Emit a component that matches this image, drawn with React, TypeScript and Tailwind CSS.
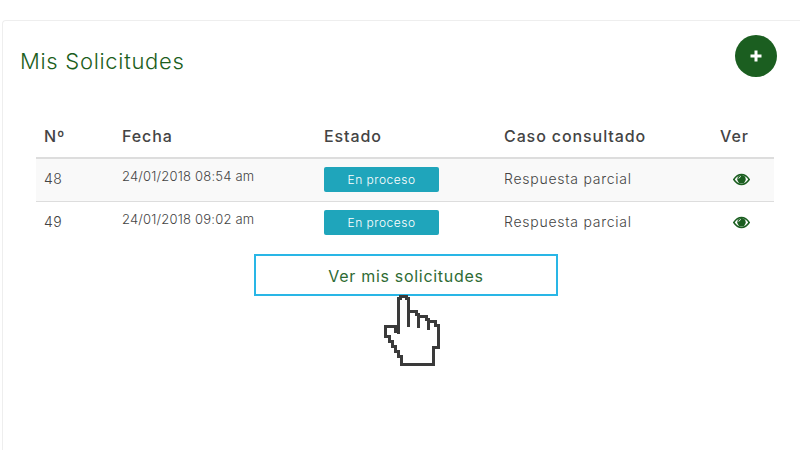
function Eye() {
  return (
    <svg width="17" height="13" viewBox="0 0 17 13" className="block">
      <path d="M0.8 6.5C3 3.2 5.6 1.6 8.5 1.6s5.5 1.6 7.7 4.9c-2.2 3.3-4.8 4.9-7.7 4.9S3 9.800 0.8 6.500z" fill="none" stroke="#1b5e20" strokeWidth="1.500" />
      <circle cx="8.500" cy="6.200" r="4.200" fill="#1b5e20" />
      <path d="M5.800 5.500c.3-1 1-1.700 2-2" fill="none" stroke="#fff" strokeWidth="1" />
    </svg>
  );
}
function Plus() {
  return (
    <svg width="12" height="12" viewBox="0 0 12 12">
      <path d="M4.500 0.500h3v4h4v3h-4v4h-3v-4h-4v-3h4z" fill="#fff" />
    </svg>
  );
}
function Hand() {
  return (
    <svg width="60" height="76" viewBox="0 0 60 76" shapeRendering="crispEdges" className="absolute left-[382px] top-[293px]">
      <path
        d="M16.500 41V5H18.500V3.500H24.500V5H26.500V18.500H34.500V21H36.500V23.500H44V26H46.500V28.500H53V32H56.500V54H51.500V71.500H19.500V63H16V58H13V53H10V48H7V43H3.500V33.500H13V38H16.500V41z"
        fill="#fff"
        stroke="#3a3a3a"
        strokeWidth="3"
      />
      <path d="M26.500 18.500V34M36.500 21V35M46.500 26V37" fill="none" stroke="#3a3a3a" strokeWidth="3" />
    </svg>
  );
}
const rows = [
  { n: "48", f: "24/01/2018 08:54 am" },
  { n: "49", f: "24/01/2018 09:02 am" },
];
export default function App() {
  return (
    <div className="relative w-[800px] h-[450px] overflow-hidden bg-white pt-5 pl-0.5 font-['Inter','Liberation_Sans',sans-serif]">
      <div className="h-[440px] w-[810px] rounded-tl border-l border-t border-[#eeeeee] bg-white">
        <div className="flex h-[93px] w-[774px] items-start justify-between pl-[17px] pt-[14px]">
          <h1 className="mt-[10px] text-[22px] leading-[32px] font-light tracking-[0.7px] text-[#1b5e20]">Mis Solicitudes</h1>
          <button className="flex h-[42px] w-[42px] items-center justify-center rounded-full bg-[#1b5e20]"><Plus /></button>
        </div>
        <table className="ml-[33px] w-[738px] table-fixed border-collapse text-[#444444]">
          <colgroup>
            <col className="w-[78px]" />
            <col className="w-[202px]" />
            <col className="w-[180px]" />
            <col className="w-[216px]" />
            <col className="w-[62px]" />
          </colgroup>
          <thead>
            <tr className="h-[44px] border-b-2 border-[#dddddd] text-left text-[16px] tracking-[0.9px]">
              <th className="px-2 font-medium">Nº</th>
              <th className="px-2 font-medium">Fecha</th>
              <th className="px-2 font-medium">Estado</th>
              <th className="px-2 font-medium">Caso consultado</th>
              <th className="px-2 font-medium">Ver</th>
            </tr>
          </thead>
          <tbody>
            {rows.map((r, i) => (
              <tr key={r.n} className={`h-[43px] text-[14px] font-light ${i === 0 ? "border-b border-[#dddddd] bg-[#f9f9f9]" : "bg-white"}`}>
                <td className="px-2 pb-[3px] tracking-[0.5px]">{r.n}</td>
                <td className="px-2 pb-[6px] text-[13px] tracking-[0.2px] whitespace-nowrap">{r.f}</td>
                <td className="px-2">
                  <span className="flex h-[25px] w-[115px] items-center justify-center rounded-[2px] bg-[#1fa5bb] text-[12px] tracking-[0.5px] text-white">En proceso</span>
                </td>
                <td className="px-2 pb-[3px] tracking-[0.75px]">Respuesta parcial</td>
                <td className="pl-[21px]"><Eye /></td>
              </tr>
            ))}
          </tbody>
        </table>
        <button className="ml-[251px] mt-[10px] flex h-[42px] w-[304px] items-center justify-center border-2 border-[#29b6e6] bg-white pt-px text-[16px] tracking-[0.7px] text-[#2e6b34]">Ver mis solicitudes</button>
      </div>
      <Hand />
    </div>
  );
}
